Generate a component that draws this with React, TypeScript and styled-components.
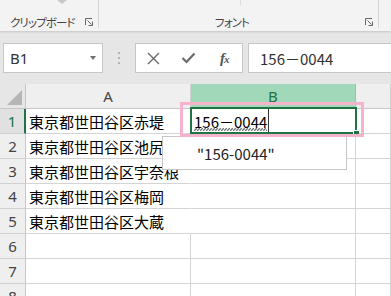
import React from 'react'
import styled, { createGlobalStyle } from 'styled-components'

const GlobalStyle = createGlobalStyle`
  html, body {
    margin: 0;
    padding: 0;
    background: #fff;
    overflow: hidden;
  }
  body {
    font-family: "Noto Sans CJK JP", "Noto Sans", sans-serif;
  }
`

const Screen = styled.div`
  position: relative;
  width: 391px;
  height: 296px;
  overflow: hidden;
  background: #fff;
`

/* ribbon */

const Ribbon = styled.div`
  position: relative;
  z-index: 2;
  display: flex;
  height: 31px;
  background: #f3f3f3;
  box-shadow: 0 1px 2px rgba(0, 0, 0, 0.14);
`

const Group = styled.div<{ w: number }>`
  display: flex;
  flex-direction: column;
  width: ${p => p.w}px;
  height: 28px;
  border-right: 1px solid #d4d4d4;
`

const GroupTop = styled.div`
  display: flex;
  height: 16px;
`

const PasteCaret = styled.div`
  width: 0;
  height: 0;
  margin-left: 57px;
  border-left: 5px solid transparent;
  border-right: 5px solid transparent;
  border-top: 4px solid #c8c8c8;
`

const FaintLine = styled.div`
  width: 1px;
  height: 5px;
  margin-left: 141px;
  background: #dcdcdc;
`

const GroupFoot = styled.div<{ center?: boolean }>`
  display: flex;
  align-items: center;
  flex: 1;
  padding: 0 5px 0 ${p => (p.center ? 0 : 10)}px;
`

const GroupLabel = styled.span<{ center?: boolean }>`
  flex: 1;
  text-align: ${p => (p.center ? 'center' : 'left')};
  font-size: 11.5px;
  font-feature-settings: "palt";
  letter-spacing: -0.9px;
  color: #444;
  line-height: 12px;
`

const Launcher = () => (
  <svg width="8" height="8" viewBox="0 0 8 8" fill="none" stroke="#666" strokeWidth="1">
    <path d="M0.5 7V0.5H7" />
    <path d="M2.5 2.5L6.5 6.5" />
    <path d="M7.5 3.5V7.5H3.5" />
  </svg>
)

/* formula bar */

const FormulaBar = styled.div`
  display: flex;
  align-items: flex-start;
  height: 53px;
  padding-top: 12px;
  box-sizing: border-box;
  background: #e6e6e6;
`

const Box = styled.div`
  height: 30px;
  box-sizing: border-box;
  background: #fff;
  border: 1px solid #c6c6c6;
  display: flex;
  align-items: center;
`

const NameBox = styled(Box)`
  width: 100px;
  margin-left: 3px;
  padding: 0 6px;
  justify-content: space-between;
  font-family: "Noto Sans", sans-serif;
  font-size: 15px;
  color: #333;
`

const NameCaret = styled.div`
  width: 0;
  height: 0;
  border-left: 3.5px solid transparent;
  border-right: 3.5px solid transparent;
  border-top: 4px solid #707070;
`

const Grip = styled.div`
  width: 32px;
  height: 30px;
  display: flex;
  flex-direction: column;
  align-items: center;
  justify-content: center;
  gap: 3px;
`

const GripDot = styled.div`
  width: 2px;
  height: 2px;
  background: #b2b2b2;
`

const Buttons = styled(Box)`
  width: 108px;
`

const Btn = styled.div`
  flex: 1;
  height: 100%;
  display: flex;
  align-items: center;
  justify-content: center;
`

const Fx = styled.span`
  font-family: "Liberation Serif", serif;
  font-style: italic;
  font-weight: bold;
  font-size: 15px;
  color: #555;
  letter-spacing: -1px;
  small {
    font-size: 11px;
  }
`

const FormulaInput = styled(Box)`
  flex: 1;
  margin-left: 5px;
  border-right: none;
  padding-left: 11px;
  font-size: 15px;
  color: #333;
`

/* sheet */

const Sheet = styled.div`
  display: grid;
  grid-template-columns: 26px 165px 165px 1fr;
  grid-auto-rows: 25px;
  background: #fff;
`

const Corner = styled.div`
  display: flex;
  align-items: flex-end;
  justify-content: flex-end;
  padding: 0 3px 3px 0;
  background: #e6e6e6;
  border-right: 1px solid #c6c6c6;
  border-bottom: 1px solid #c6c6c6;
  &::after {
    content: "";
    width: 0;
    height: 0;
    border-left: 15px solid transparent;
    border-bottom: 15px solid #b6b6b6;
  }
`

const ColHead = styled.div<{ active?: boolean }>`
  display: flex;
  align-items: center;
  justify-content: center;
  box-sizing: border-box;
  font-family: "Noto Sans", sans-serif;
  font-size: 15px;
  background: ${p => (p.active ? '#a2d8ba' : '#efefef')};
  color: ${p => (p.active ? '#217346' : '#444')};
  border-right: 1px solid ${p => (p.active ? '#8fc6a7' : '#d0d0d0')};
  border-bottom: 1px solid ${p => (p.active ? '#217346' : '#c6c6c6')};
`

const RowHead = styled.div<{ active?: boolean }>`
  display: flex;
  align-items: center;
  justify-content: center;
  box-sizing: border-box;
  font-family: "Noto Sans", sans-serif;
  font-size: 15px;
  background: ${p => (p.active ? '#e1e1e1' : '#efefef')};
  color: ${p => (p.active ? '#217346' : '#444')};
  border-bottom: 1px solid #d0d0d0;
  border-right: ${p => (p.active ? '2px solid #217346' : '1px solid #c6c6c6')};
`

const Cell = styled.div`
  position: relative;
  display: flex;
  align-items: center;
  box-sizing: border-box;
  padding-left: 3px;
  font-size: 15px;
  color: #000;
  white-space: nowrap;
  border-right: 1px solid #d4d4d4;
  border-bottom: 1px solid #d4d4d4;
`

const Spill = styled(Cell)`
  overflow: visible;
  border-right-color: transparent;
`

const ActiveCell = styled(Cell)`
  z-index: 1;
  &::before {
    content: "";
    position: absolute;
    left: -1px;
    top: -2px;
    right: -2px;
    bottom: -1px;
    border: 2px solid #217346;
    pointer-events: none;
  }
`

const FillHandle = styled.div`
  position: absolute;
  right: -4px;
  bottom: -3px;
  width: 5px;
  height: 5px;
  background: #217346;
  border: 1px solid #fff;
  border-bottom: none;
  border-right: none;
`

const Composing = styled.span`
  position: relative;
  &::after {
    content: "";
    position: absolute;
    left: 0;
    right: 0;
    bottom: 1px;
    height: 3px;
    background:
      linear-gradient(135deg, transparent 45%, #777 45%, #777 60%, transparent 60%) 0 0 / 3px 3px repeat-x,
      linear-gradient(45deg, transparent 45%, #777 45%, #777 60%, transparent 60%) 1.5px 0 / 3px 3px repeat-x;
  }
`

const Caret = styled.span`
  align-self: stretch;
  width: 1px;
  margin-left: 1px;
  background: #333;
`

const Suggest = styled.div`
  position: absolute;
  z-index: 3;
  left: 162px;
  top: 136px;
  width: 185px;
  height: 34px;
  box-sizing: border-box;
  display: flex;
  align-items: center;
  padding-left: 34px;
  background: #fff;
  border: 1px solid #c6c6c6;
  font-size: 15px;
  color: #222;
`

const Highlight = styled.div`
  position: absolute;
  z-index: 4;
  left: 180px;
  top: 102px;
  width: 184px;
  height: 35px;
  box-sizing: border-box;
  border: 3px solid #f5b4cb;
  pointer-events: none;
`

const addresses = [
  '東京都世田谷区赤堤',
  '東京都世田谷区池尻',
  '東京都世田谷区宇奈根',
  '東京都世田谷区梅岡',
  '東京都世田谷区大蔵',
  '',
  '',
  '',
]

const App: React.FC = () => (
  <Screen>
    <GlobalStyle />
    <Ribbon>
      <Group w={98}>
        <GroupTop>
          <PasteCaret />
        </GroupTop>
        <GroupFoot>
          <GroupLabel>クリップボード</GroupLabel>
          <Launcher />
        </GroupFoot>
      </Group>
      <Group w={279}>
        <GroupTop>
          <FaintLine />
        </GroupTop>
        <GroupFoot center>
          <GroupLabel center>フォント</GroupLabel>
          <Launcher />
        </GroupFoot>
      </Group>
    </Ribbon>

    <FormulaBar>
      <NameBox>
        <span>B1</span>
        <NameCaret />
      </NameBox>
      <Grip>
        <GripDot />
        <GripDot />
        <GripDot />
      </Grip>
      <Buttons>
        <Btn>
          <svg width="13" height="13" viewBox="0 0 13 13" stroke="#6a6a6a" strokeWidth="1.4">
            <path d="M1 1L12 12M12 1L1 12" />
          </svg>
        </Btn>
        <Btn>
          <svg width="15" height="12" viewBox="0 0 15 12" fill="none" stroke="#6a6a6a" strokeWidth="2.2">
            <path d="M1.5 6L5.5 10L13.5 1.5" />
          </svg>
        </Btn>
        <Btn>
          <Fx>
            f<small>x</small>
          </Fx>
        </Btn>
      </Buttons>
      <FormulaInput>156－0044</FormulaInput>
    </FormulaBar>

    <Sheet>
      <Corner />
      <ColHead>A</ColHead>
      <ColHead active>B</ColHead>
      <ColHead />
      {addresses.map((addr, i) =>
        i === 0 ? (
          <React.Fragment key={i}>
            <RowHead active>1</RowHead>
            <Cell>{addr}</Cell>
            <ActiveCell>
              <Composing>156－0044</Composing>
              <Caret />
              <FillHandle />
            </ActiveCell>
            <Cell />
          </React.Fragment>
        ) : (
          <React.Fragment key={i}>
            <RowHead>{i + 1}</RowHead>
            {addr ? <Spill>{addr}</Spill> : <Cell />}
            <Cell />
            <Cell />
          </React.Fragment>
        ),
      )}
    </Sheet>

    <Suggest>"156-0044"</Suggest>
    <Highlight />
  </Screen>
)

export default App
